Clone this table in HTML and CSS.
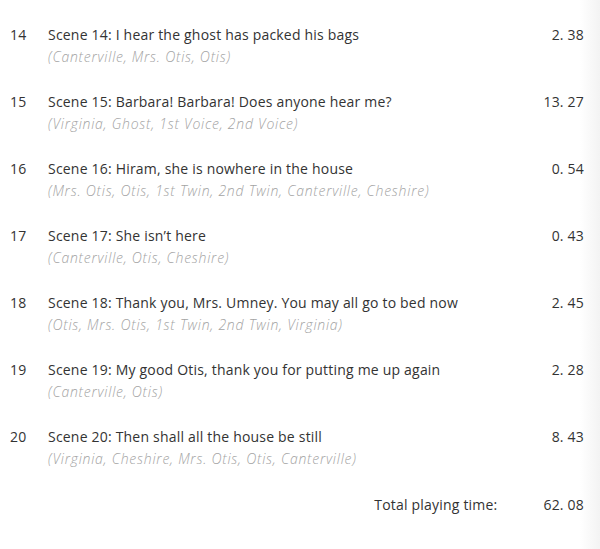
FILE: index.html
```html
<!DOCTYPE html>
<html lang="en">
<head>
    <meta charset="UTF-8">
    <title>The Canterville Ghost - Track list</title>
    <link rel="stylesheet" href="styles.css">
</head>
<body>
    <div class="tracks">
        <div class="track">
            <span class="num">14</span>
            <div class="info">
                <div class="title">Scene 14: I hear the ghost has packed his bags</div>
                <div class="cast">(Canterville, Mrs. Otis, Otis)</div>
            </div>
            <span class="time">2. 38</span>
        </div>
        <div class="track">
            <span class="num">15</span>
            <div class="info">
                <div class="title">Scene 15: Barbara! Barbara! Does anyone hear me?</div>
                <div class="cast">(Virginia, Ghost, 1st Voice, 2nd Voice)</div>
            </div>
            <span class="time">13. 27</span>
        </div>
        <div class="track">
            <span class="num">16</span>
            <div class="info">
                <div class="title">Scene 16: Hiram, she is nowhere in the house</div>
                <div class="cast">(Mrs. Otis, Otis, 1st Twin, 2nd Twin, Canterville, Cheshire)</div>
            </div>
            <span class="time">0. 54</span>
        </div>
        <div class="track">
            <span class="num">17</span>
            <div class="info">
                <div class="title">Scene 17: She isn’t here</div>
                <div class="cast">(Canterville, Otis, Cheshire)</div>
            </div>
            <span class="time">0. 43</span>
        </div>
        <div class="track">
            <span class="num">18</span>
            <div class="info">
                <div class="title">Scene 18: Thank you, Mrs. Umney. You may all go to bed now</div>
                <div class="cast">(Otis, Mrs. Otis, 1st Twin, 2nd Twin, Virginia)</div>
            </div>
            <span class="time">2. 45</span>
        </div>
        <div class="track">
            <span class="num">19</span>
            <div class="info">
                <div class="title">Scene 19: My good Otis, thank you for putting me up again</div>
                <div class="cast">(Canterville, Otis)</div>
            </div>
            <span class="time">2. 28</span>
        </div>
        <div class="track">
            <span class="num">20</span>
            <div class="info">
                <div class="title">Scene 20: Then shall all the house be still</div>
                <div class="cast">(Virginia, Cheshire, Mrs. Otis, Otis, Canterville)</div>
            </div>
            <span class="time">8. 43</span>
        </div>
    </div>

    <div class="total">
        <span class="total-label">Total playing time:</span>
        <span class="time">62. 08</span>
    </div>
</body>
</html>
```

FILE: styles.css
```css
body {
    margin: 0;
    padding: 24px 16px 0 10px;
    min-height: 549px;
    box-sizing: border-box;
    font-family: "Open Sans", Lato, sans-serif;
    font-size: 14px;
    letter-spacing: 0.2px;
    color: #333;
    background: linear-gradient(to right, #fff calc(100% - 20px), #f3f3f3);
}
.tracks {
    display: flex;
    flex-direction: column;
    gap: 23px;
}
.track {
    display: grid;
    grid-template-columns: 38px 1fr auto;
    line-height: 22px;
}
.cast {
    font-style: italic;
    font-weight: 300;
    font-size: 14px;
    letter-spacing: 0.75px;
    color: #a3a3a3;
}
.time {
    text-align: right;
}
.total {
    display: flex;
    justify-content: flex-end;
    gap: 46px;
    margin-top: 24px;
    line-height: 22px;
}
```
